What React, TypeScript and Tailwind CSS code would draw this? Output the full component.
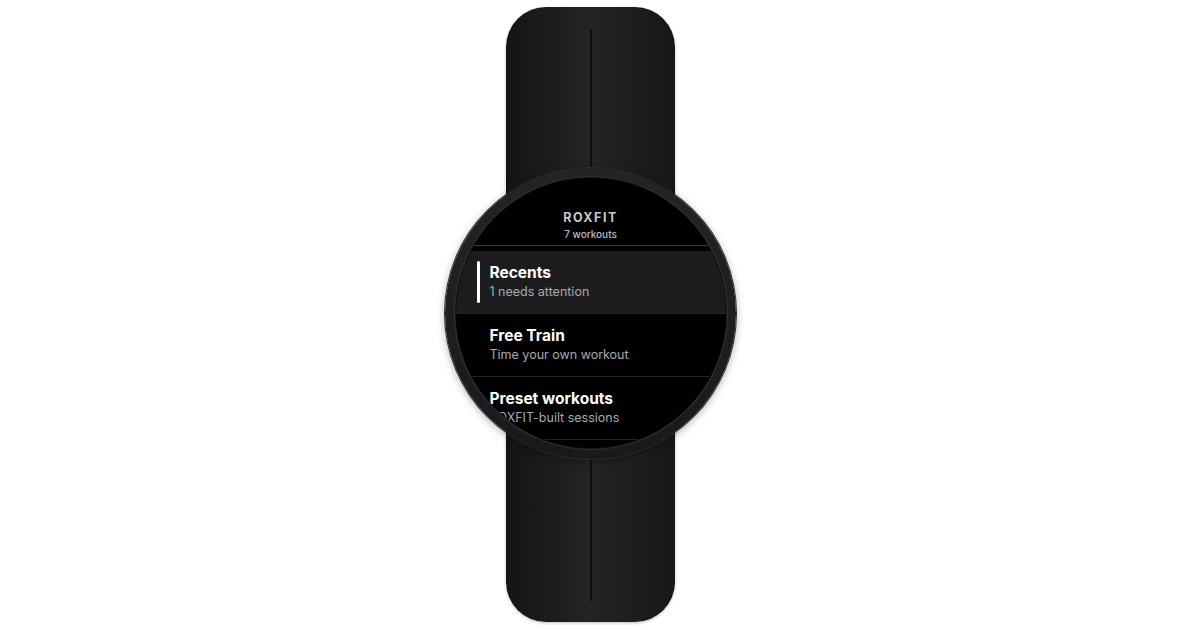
import React from "react";

type Item = { title: string; subtitle: string; active?: boolean };

const items: Item[] = [
  { title: "Recents", subtitle: "1 needs attention", active: true },
  { title: "Free Train", subtitle: "Time your own workout" },
  { title: "Preset workouts", subtitle: "ROXFIT-built sessions" },
];

function Row({ item }: { item: Item }) {
  return (
    <div
      className={`flex h-[63px] shrink-0 items-stretch gap-[10px] border-b border-[#232325] pl-[21px] ${
        item.active ? "bg-[#1c1c1e]" : "bg-black"
      }`}
    >
      <div
        className={`my-[10px] w-[3px] rounded-full ${item.active ? "bg-white" : "bg-transparent"}`}
      />
      <div className="flex flex-col justify-center gap-[2px] pb-[1px]">
        <div className="text-[15.5px] font-bold leading-[18px] text-white">{item.title}</div>
        <div className="text-[12.5px] leading-[16px] text-[#a9a9ac]">{item.subtitle}</div>
      </div>
    </div>
  );
}

function WatchScreen() {
  return (
    <div className="flex h-[270px] w-[270px] flex-col overflow-hidden rounded-full bg-black">
      <div className="flex flex-col items-center pt-[32px] pb-[5px]">
        <div className="text-[12.5px] font-bold leading-[16px] tracking-[0.12em] text-[#c8c8c8]">
          ROXFIT
        </div>
        <div className="mt-[2px] text-[10px] font-medium leading-[12px] text-[#bcbcbc]">
          7 workouts
        </div>
      </div>
      <div className="h-[1px] shrink-0 bg-[#3c3c3e]" />
      <div className="h-[5px] shrink-0" />
      {items.map((item) => (
        <Row key={item.title} item={item} />
      ))}
    </div>
  );
}

export default function App() {
  return (
    <div
      className="flex h-[630px] w-full justify-center bg-white pt-[7px]"
      style={{ fontFamily: "Inter, 'Noto Sans', sans-serif" }}
    >
      <div className="relative mr-[19px] flex h-[615px] w-[169px] items-center justify-center rounded-[40px] bg-linear-to-r from-[#141414] via-[#242425] to-[#171717] shadow-[0_1px_3px_rgba(0,0,0,0.25)]">
        <div className="absolute top-[22px] bottom-[21px] left-[84px] w-[2px] bg-[#0f0f0f]" />
        <div className="relative mt-[-3px] flex h-[291px] w-[291px] shrink-0 items-center justify-center rounded-full bg-linear-to-b from-[#242426] to-[#19191b] shadow-[0_2px_8px_rgba(0,0,0,0.35)] ring-1 ring-[#2c2c2e]">
          <div className="rounded-full bg-[#121213] p-[1px] ring-1 ring-[#333335]">
            <WatchScreen />
          </div>
        </div>
      </div>
    </div>
  );
}
